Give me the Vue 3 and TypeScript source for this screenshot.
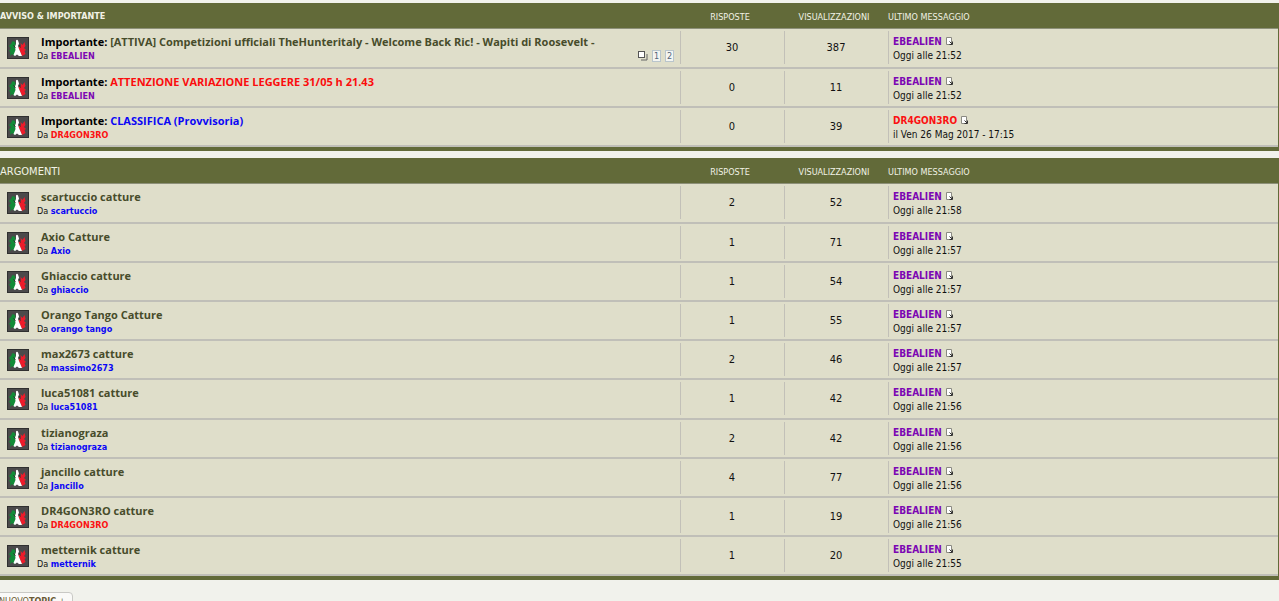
<script setup lang="ts">
interface Topic {
  title: string
  tone?: 'red' | 'blue'
  author: string
  authorRole: 'admin' | 'mod' | 'user'
  replies: number
  views: number
  last: string
  lastRole: 'admin' | 'mod' | 'user'
  date: string
  pages?: number[]
}

interface Section {
  heading: string
  sticky: boolean
  topics: Topic[]
}

const topic = (
  title: string,
  author: string,
  replies: number,
  views: number,
  time: string,
  authorRole: Topic['authorRole'] = 'user',
): Topic => ({
  title, author, authorRole, replies, views, last: 'EBEALIEN', lastRole: 'admin', date: `Oggi alle ${time}`,
})

const sections: Section[] = [
  {
    heading: 'AVVISO & IMPORTANTE',
    sticky: true,
    topics: [
      {
        ...topic('[ATTIVA] Competizioni ufficiali TheHunteritaly - Welcome Back Ric! - Wapiti di Roosevelt -', 'EBEALIEN', 30, 387, '21:52', 'admin'),
        pages: [1, 2],
      },
      { ...topic('ATTENZIONE VARIAZIONE LEGGERE 31/05 h 21.43', 'EBEALIEN', 0, 11, '21:52', 'admin'), tone: 'red' },
      {
        title: 'CLASSIFICA (Provvisoria)', tone: 'blue', author: 'DR4GON3RO', authorRole: 'mod',
        replies: 0, views: 39, last: 'DR4GON3RO', lastRole: 'mod', date: 'il Ven 26 Mag 2017 - 17:15',
      },
    ],
  },
  {
    heading: 'ARGOMENTI',
    sticky: false,
    topics: [
      topic('scartuccio catture', 'scartuccio', 2, 52, '21:58'),
      topic('Axio Catture', 'Axio', 1, 71, '21:57'),
      topic('Ghiaccio catture', 'ghiaccio', 1, 54, '21:57'),
      topic('Orango Tango Catture', 'orango tango', 1, 55, '21:57'),
      topic('max2673 catture', 'massimo2673', 2, 46, '21:57'),
      topic('luca51081 catture', 'luca51081', 1, 42, '21:56'),
      topic('tizianograza', 'tizianograza', 2, 42, '21:56'),
      topic('jancillo catture', 'Jancillo', 4, 77, '21:56'),
      topic('DR4GON3RO catture', 'DR4GON3RO', 1, 19, '21:56', 'mod'),
      topic('metternik catture', 'metternik', 1, 20, '21:55'),
    ],
  },
]
</script>

<template>
  <main class="forum">
    <table v-for="section in sections" :key="section.heading" class="board" :class="{ sticky: section.sticky }">
      <colgroup>
        <col />
        <col class="col-num" />
        <col class="col-num" />
        <col class="col-last" />
      </colgroup>
      <thead>
        <tr>
          <th scope="col" class="heading">{{ section.heading }}</th>
          <th scope="col" class="num-head">RISPOSTE</th>
          <th scope="col" class="num-head">VISUALIZZAZIONI</th>
          <th scope="col">ULTIMO MESSAGGIO</th>
        </tr>
      </thead>
      <tbody>
        <tr v-for="t in section.topics" :key="t.title">
          <td class="subject">
            <div class="subject-row">
              <svg class="status" viewBox="0 0 22 22" aria-hidden="true">
                <rect width="22" height="22" fill="#303030" />
                <rect x="1" y="1" width="20" height="20" fill="#4b4a4b" />
                <path d="M5.500 4L8 5L8.500 8L7 10L9 12L7.500 19L5 17L3 19L3.500 15L2 14L4 11L2 9L4 7Z" fill="#128c38" />
                <path d="M13.500 6L15.500 8L17.500 5L18.500 9L17 11L19 13L17.500 14L18.500 17L15 19L12 12L11.500 10L14 9Z" fill="#ed1c2b" />
                <path d="M9 3.500Q10 2 11 3.500L12 6.500L11 9L12 12L15 19H12L10 17.500L8 19L6.500 18L8.500 13L8 9.500L9 7Z" fill="#fff" />
                <path d="M6.500 8.500L8.500 10.500M12 8L13.500 10.500" stroke="#2d2d2d" stroke-width="1" />
              </svg>
              <div class="subject-text">
                <div class="title-line">
                  <template v-if="section.sticky">Importante: </template>
                  <a href="#" class="title" :class="t.tone">{{ t.title }}</a>
                </div>
                <div class="by-line">
                  <span>Da <a href="#" class="user" :class="t.authorRole">{{ t.author }}</a></span>
                  <span v-if="t.pages" class="pages">
                    <svg class="pages-icon" viewBox="0 0 10 10" aria-hidden="true">
                      <path d="M3 9H9V3" fill="none" stroke="#666" />
                      <rect x="0.5" y="0.5" width="6" height="6" fill="#fff" stroke="#555" />
                    </svg>
                    <a v-for="p in t.pages" :key="p" href="#" class="page">{{ p }}</a>
                  </span>
                </div>
              </div>
            </div>
          </td>
          <td class="num">{{ t.replies }}</td>
          <td class="num">{{ t.views }}</td>
          <td class="last">
            <div>
              <a href="#" class="user" :class="t.lastRole">{{ t.last }}</a>
              <a href="#" class="goto" aria-label="Ultimo messaggio">
                <svg viewBox="0 0 7 8" aria-hidden="true">
                  <path d="M0.5 0.5H5.5V7.5H0.5Z" fill="#fff" stroke="#8a8a82" />
                  <path d="M3.500 4.500L6 7M6.500 4.500V7.500H3.500" fill="none" stroke="#333" />
                </svg>
              </a>
            </div>
            <div>{{ t.date }}</div>
          </td>
        </tr>
      </tbody>
    </table>
    <button type="button" class="new-topic">NUOVO<b>TOPIC</b> +</button>
  </main>
</template>

<style>
html {
  overflow: hidden;
}

body {
  margin: 0;
  background: #f1f2ec;
}
</style>

<style scoped>
.forum {
  box-sizing: border-box;
  padding-top: 3px;
  min-height: 100vh;
  overflow: hidden;
  background: #f1f2ec;
  color: #111;
  font: 11px/14px "DejaVu Sans Condensed", Tahoma, "DejaVu Sans", sans-serif;
}

.board {
  width: 100%;
  margin-bottom: 7px;
  table-layout: fixed;
  border-collapse: separate;
  border-spacing: 0;
  border-right: 1px solid #626a39;
  border-bottom: 4px solid #626a39;
}

.col-num {
  width: 104px;
}

.col-last {
  width: 390px;
}

th {
  box-sizing: border-box;
  height: 26px;
  padding: 3px 0 0;
  border-bottom: 1px solid #8d9079;
  background: #626a39;
  color: #f1f2e6;
  font-size: 9px;
  font-weight: normal;
  line-height: 14px;
  text-align: left;
  white-space: nowrap;
}

.heading {
  font-size: 11px;
}

.sticky .heading {
  padding-top: 0;
  font-size: 9px;
  font-weight: bold;
}

.num-head {
  padding-right: 4px;
  text-align: center;
}

td {
  box-sizing: border-box;
  height: 39px;
  padding: 0;
  border-bottom: 2px solid #c0bfb8;
  background: #dfdeca;
  vertical-align: top;
}

.sticky tr:first-child td,
tr:nth-child(5n + 1) td {
  height: 40px;
}

.num,
.last {
  background: linear-gradient(#c2c0b8, #c2c0b8) 0 2px / 1px 33px no-repeat #dfdeca;
}

.subject-row {
  display: flex;
}

.status {
  flex: none;
  width: 22px;
  height: 22px;
  margin: 8px 8px 0 7px;
}

.subject-text {
  flex: 1;
  min-width: 0;
  padding: 6px 6px 0 0;
}

.title-line {
  padding-left: 4px;
  color: #000;
  font-family: "Open Sans", Tahoma, sans-serif;
  font-weight: bold;
  white-space: nowrap;
}

a {
  color: inherit;
  text-decoration: none;
}

.title {
  color: #474c2b;
}

.title.red {
  color: #fb0d0d;
}

.title.blue {
  color: #0b07f5;
}

.by-line {
  display: flex;
  justify-content: space-between;
  font-size: 9px;
}

.user {
  font-weight: bold;
}

.user.admin {
  color: #7c06b3;
}

.user.mod {
  color: #fb1212;
}

.user.user:not(.admin):not(.mod) {
  color: #0b07f5;
}

.pages {
  display: flex;
  align-items: center;
  gap: 4px;
}

.pages-icon {
  width: 10px;
  height: 10px;
}

.page {
  box-sizing: border-box;
  width: 9px;
  height: 12px;
  border: 1px solid #b9c5cc;
  background: #f4f5f1;
  color: #56657a;
  font-size: 9px;
  line-height: 10px;
  text-align: center;
}

.num {
  padding-top: 12px;
  text-align: center;
}

.last {
  padding: 6px 0 0 5px;
  font-size: 10px;
  line-height: 14px;
  white-space: nowrap;
}

.goto {
  margin-left: 4px;
}

.goto svg {
  width: 7px;
  height: 8px;
}

.new-topic {
  display: block;
  height: 26px;
  margin: 12px 0 0 -8px;
  padding: 0 6px 8px;
  border: 1px solid #c9c9c5;
  border-radius: 4px;
  background: #fafaf8;
  color: #6a5b35;
  font: 9px/12px "DejaVu Sans Condensed", "DejaVu Sans", sans-serif;
}
</style>
